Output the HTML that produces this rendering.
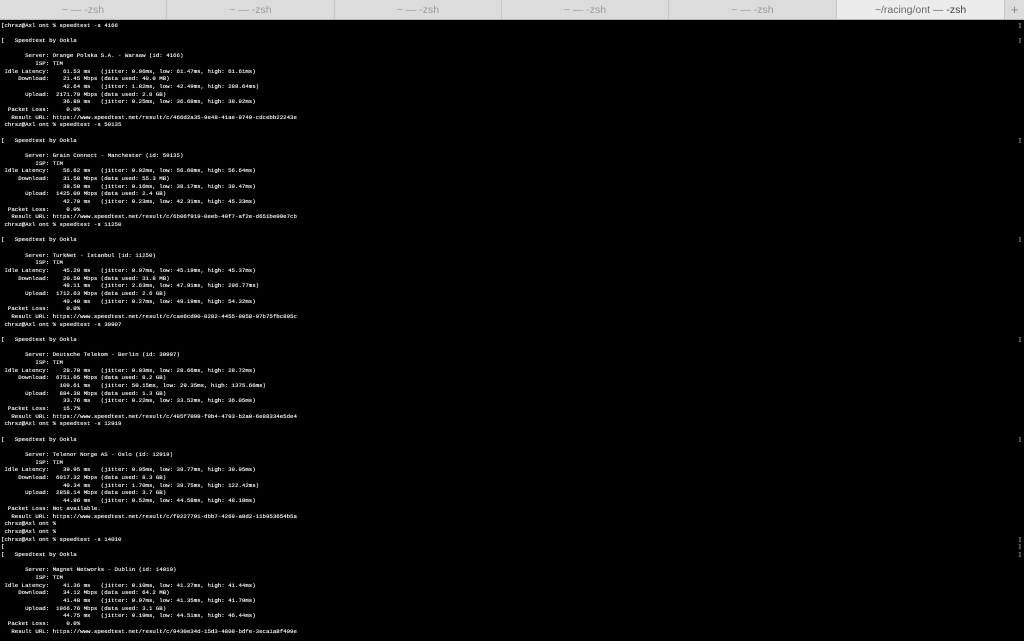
<!DOCTYPE html>
<html><head><meta charset="utf-8"><style>
html,body{margin:0;padding:0;background:#000;width:1024px;height:641px;overflow:hidden}
#bar{position:absolute;left:0;top:0;width:1024px;height:20px;background:#dcdcdc;border-bottom:1px solid #b8b8b8;box-sizing:border-box}
.tab{position:absolute;top:0;height:19px;text-align:center;font:10.5px "Liberation Sans",sans-serif;line-height:20px;color:#9c9c9c;border-right:1px solid #c6c6c6;box-sizing:border-box}
.tab.act{background:#ececec;color:#6a6a6a}
#term{position:absolute;left:1px;top:21.5px;font-family:"Liberation Mono",monospace;font-size:5.74px;line-height:7.68px;color:#f0f0f0;width:1023px;text-shadow:0 0 0.4px #fff}
.l{height:7.68px;position:relative;white-space:pre;overflow:visible}
.b::after{content:"]";position:absolute;left:1017px;top:0;color:#888}
</style></head><body>
<div id="bar">
<div class="tab" style="left:0;width:167px">~ — -zsh</div>
<div class="tab" style="left:167px;width:168px">~ — -zsh</div>
<div class="tab" style="left:335px;width:167px">~ — -zsh</div>
<div class="tab" style="left:502px;width:167px">~ — -zsh</div>
<div class="tab" style="left:669px;width:168px">~ — -zsh</div>
<div class="tab act" style="left:837px;width:168px">~/racing/ont — <span style="color:#444">-zsh</span></div>
<div class="tab" style="left:1005px;width:19px;border-right:none;font-size:13px;color:#888">+</div>
</div>
<div id="term"><div class="l b">[chrsz@Axl ont % speedtest -s 4166</div><div class="l"></div><div class="l b">[   Speedtest by Ookla</div><div class="l"></div><div class="l">       Server: Orange Polska S.A. - Warsaw (id: 4166)</div><div class="l">          ISP: TIM</div><div class="l"> Idle Latency:    61.53 ms   (jitter: 0.06ms, low: 61.47ms, high: 61.61ms)</div><div class="l">     Download:    21.45 Mbps (data used: 40.0 MB)</div><div class="l">                  42.64 ms   (jitter: 1.82ms, low: 42.49ms, high: 288.64ms)</div><div class="l">       Upload:  2171.79 Mbps (data used: 2.8 GB)</div><div class="l">                  36.89 ms   (jitter: 0.25ms, low: 36.68ms, high: 38.92ms)</div><div class="l">  Packet Loss:     0.0%</div><div class="l">   Result URL: https://www.speedtest.net/result/c/466d2a35-9e48-41ae-9749-cdcebb22243e</div><div class="l"> chrsz@Axl ont % speedtest -s 59135</div><div class="l"></div><div class="l b">[   Speedtest by Ookla</div><div class="l"></div><div class="l">       Server: Grain Connect - Manchester (id: 59135)</div><div class="l">          ISP: TIM</div><div class="l"> Idle Latency:    56.62 ms   (jitter: 0.02ms, low: 56.60ms, high: 56.64ms)</div><div class="l">     Download:    31.58 Mbps (data used: 55.3 MB)</div><div class="l">                  38.50 ms   (jitter: 0.16ms, low: 38.17ms, high: 39.47ms)</div><div class="l">       Upload:  1425.09 Mbps (data used: 2.4 GB)</div><div class="l">                  42.70 ms   (jitter: 0.23ms, low: 42.31ms, high: 45.33ms)</div><div class="l">  Packet Loss:     0.0%</div><div class="l">   Result URL: https://www.speedtest.net/result/c/6b06f919-0eeb-49f7-af2e-d651be09e7cb</div><div class="l"> chrsz@Axl ont % speedtest -s 11250</div><div class="l"></div><div class="l b">[   Speedtest by Ookla</div><div class="l"></div><div class="l">       Server: TurkNet - Istanbul (id: 11250)</div><div class="l">          ISP: TIM</div><div class="l"> Idle Latency:    45.29 ms   (jitter: 0.07ms, low: 45.19ms, high: 45.37ms)</div><div class="l">     Download:    20.50 Mbps (data used: 31.8 MB)</div><div class="l">                  48.11 ms   (jitter: 2.63ms, low: 47.91ms, high: 296.77ms)</div><div class="l">       Upload:  1712.63 Mbps (data used: 2.6 GB)</div><div class="l">                  49.40 ms   (jitter: 0.27ms, low: 49.19ms, high: 54.32ms)</div><div class="l">  Packet Loss:     0.0%</div><div class="l">   Result URL: https://www.speedtest.net/result/c/cae6cd90-0282-4455-8058-07b75fbc805c</div><div class="l"> chrsz@Axl ont % speedtest -s 30907</div><div class="l"></div><div class="l b">[   Speedtest by Ookla</div><div class="l"></div><div class="l">       Server: Deutsche Telekom - Berlin (id: 30907)</div><div class="l">          ISP: TIM</div><div class="l"> Idle Latency:    28.70 ms   (jitter: 0.03ms, low: 28.66ms, high: 28.72ms)</div><div class="l">     Download:  6751.05 Mbps (data used: 8.2 GB)</div><div class="l">                 109.61 ms   (jitter: 50.15ms, low: 29.35ms, high: 1375.66ms)</div><div class="l">       Upload:   884.38 Mbps (data used: 1.3 GB)</div><div class="l">                  33.76 ms   (jitter: 0.22ms, low: 33.52ms, high: 36.05ms)</div><div class="l">  Packet Loss:    15.7%</div><div class="l">   Result URL: https://www.speedtest.net/result/c/495f7098-f9b4-4793-b2a0-6e88334e5de4</div><div class="l"> chrsz@Axl ont % speedtest -s 12919</div><div class="l"></div><div class="l b">[   Speedtest by Ookla</div><div class="l"></div><div class="l">       Server: Telenor Norge AS - Oslo (id: 12919)</div><div class="l">          ISP: TIM</div><div class="l"> Idle Latency:    39.95 ms   (jitter: 0.05ms, low: 39.77ms, high: 39.95ms)</div><div class="l">     Download:  6017.32 Mbps (data used: 8.3 GB)</div><div class="l">                  40.34 ms   (jitter: 1.70ms, low: 39.75ms, high: 122.42ms)</div><div class="l">       Upload:  2858.14 Mbps (data used: 3.7 GB)</div><div class="l">                  44.86 ms   (jitter: 0.52ms, low: 44.58ms, high: 48.18ms)</div><div class="l">  Packet Loss: Not available.</div><div class="l">   Result URL: https://www.speedtest.net/result/c/f9227791-dbb7-4269-a8d2-11b953654b5a</div><div class="l"> chrsz@Axl ont %</div><div class="l"> chrsz@Axl ont %</div><div class="l b">[chrsz@Axl ont % speedtest -s 14010</div><div class="l b">[</div><div class="l b">[   Speedtest by Ookla</div><div class="l"></div><div class="l">       Server: Magnet Networks - Dublin (id: 14010)</div><div class="l">          ISP: TIM</div><div class="l"> Idle Latency:    41.36 ms   (jitter: 0.10ms, low: 41.27ms, high: 41.44ms)</div><div class="l">     Download:    34.12 Mbps (data used: 64.2 MB)</div><div class="l">                  41.48 ms   (jitter: 0.07ms, low: 41.35ms, high: 41.79ms)</div><div class="l">       Upload:  1966.76 Mbps (data used: 3.1 GB)</div><div class="l">                  44.75 ms   (jitter: 0.19ms, low: 44.51ms, high: 46.44ms)</div><div class="l">  Packet Loss:     0.0%</div><div class="l">   Result URL: https://www.speedtest.net/result/c/9430e34d-15d3-4808-bdfe-3eca1a8f409e</div></div>
</body></html>
